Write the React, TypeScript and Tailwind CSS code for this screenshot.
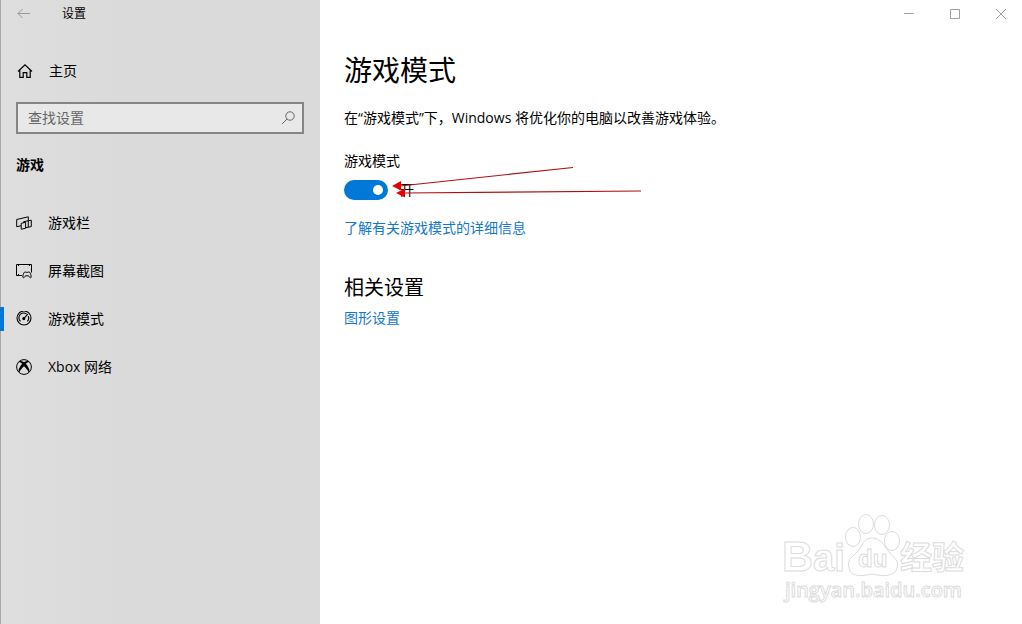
import { useState } from "react";
import clsx from "clsx";

type IconProps = { className?: string };

type NavItem = {
  id: string;
  label: string;
  icon: React.ComponentType<IconProps>;
};

const BackIcon = ({ className }: IconProps) => (
  <svg viewBox="0 0 16 16" fill="none" stroke="currentColor" className={className}>
    <path d="M14 7.5H2M6.500 3L2 7.500l4.500 4.500" />
  </svg>
);

const HomeIcon = ({ className }: IconProps) => (
  <svg viewBox="0 0 16 16" fill="none" stroke="currentColor" strokeWidth="1.2" className={className}>
    <path d="M1 8.5L8 1.8l7 6.7M2.8 7v7.400h3.400V9.600h3.600v4.800h3.400V7" />
  </svg>
);

const SearchIcon = ({ className }: IconProps) => (
  <svg viewBox="0 0 16 16" fill="none" stroke="currentColor" className={className}>
    <circle cx="10" cy="6" r="4.2" />
    <path d="M7 9l-5 5" />
  </svg>
);

const GameBarIcon = ({ className }: IconProps) => (
  <svg viewBox="0 0 16 16" fill="none" stroke="currentColor" className={className}>
    <path d="M5 10.800L.7 11.700V4.500l11.600-2.700v3.700" />
    <path d="M5.200 8.300l4.400-1v6l-4.400.9z" />
    <path d="M7.600 7.600V6.700l7.700-1.500v6.400l-5.500 1.100" />
    <path d="M12.300 5.800v6.300" />
  </svg>
);

const CapturesIcon = ({ className }: IconProps) => (
  <svg viewBox="0 0 16 16" fill="none" stroke="currentColor" className={className}>
    <path d="M6 12.500H.500V1.500h15v8M2.500 1.500v1.500M13.500 1.500v1.500M2.500 12.500V11" />
    <path d="M8.400 9.200c1-.5 1.400.2 2.600.2s1.600-.7 2.600-.2c.9.800 1.700 3.600 1.500 5.100-.4 1-1.400.5-2.600-1.500h-3c-1.200 2-2.200 2.500-2.600 1.500-.2-1.500.6-4.300 1.500-5.100z" />
  </svg>
);

const GaugeIcon = ({ className }: IconProps) => (
  <svg viewBox="0 0 16 16" fill="none" stroke="currentColor" strokeWidth="1.1" className={className}>
    <circle cx="8" cy="7" r="7" />
    <path d="M4.600 10.400A4.700 4.700 0 0 1 10.600 3.100M12.300 5.300a4.700 4.700 0 0 1-.9 5.100" />
    <path d="M8 7.400l3.800-4.200" />
    <circle cx="7.800" cy="7.600" r="1" fill="currentColor" />
  </svg>
);

const XboxIcon = ({ className }: IconProps) => (
  <svg viewBox="0 0 16 16" fill="none" className={className}>
    <circle cx="8" cy="8" r="7.400" stroke="currentColor" />
    <path
      d="M3.400 2.200C5 1.600 7 2.600 8 3.300 9 2.600 11 1.600 12.600 2.200L13.300 3C12.400 2.800 11 3.700 9.900 4.800 12 7.200 13.800 10.500 13.500 12.700L12.600 13.600C12.300 11.700 10 9 8 7.200 6 9 3.700 11.700 3.400 13.600L2.500 12.700C2.200 10.500 4 7.200 6.100 4.800 5 3.700 3.600 2.800 2.700 3z"
      fill="currentColor"
    />
  </svg>
);

const navItems: NavItem[] = [
  { id: "bar", label: "游戏栏", icon: GameBarIcon },
  { id: "captures", label: "屏幕截图", icon: CapturesIcon },
  { id: "mode", label: "游戏模式", icon: GaugeIcon },
  { id: "xbox", label: "Xbox 网络", icon: XboxIcon },
];

const Sidebar = () => {
  const [active, setActive] = useState("mode");

  return (
    <aside className="flex w-80 shrink-0 flex-col border-l border-[#a8a8a8] bg-linear-to-r from-[#dedede] to-[#dadada] to-40%">
      <header className="flex h-7 items-center pl-[15px]">
        <button type="button" aria-label="返回" className="text-[#999999]">
          <BackIcon className="size-4" />
        </button>
        <span className="pl-[30px] text-xs">设置</span>
      </header>
      <a href="#home" className="mt-5 flex h-[46px] items-center gap-4 pl-4">
        <HomeIcon className="size-4" />
        <span>主页</span>
      </a>
      <div className="mt-2 mr-4 ml-[15px] flex h-8 items-center border-2 border-[#858585] bg-[#e8e8e8] pr-1.5 pl-2.5">
        <input
          type="text"
          aria-label="查找设置"
          placeholder="查找设置"
          className="min-w-0 flex-1 bg-transparent outline-none placeholder:text-[#666666]"
        />
        <button type="button" aria-label="搜索" className="text-[#666666]">
          <SearchIcon className="size-4" />
        </button>
      </div>
      <h2 className="mt-[15px] flex h-8 items-center pl-[15px] font-bold">游戏</h2>
      <nav className="mt-[18px] flex flex-col">
        {navItems.map((item) => {
          const Icon = item.icon;
          return (
            <a
              key={item.id}
              href={`#${item.id}`}
              onClick={() => setActive(item.id)}
              className="-ml-px flex h-12 items-center"
            >
              <span
                className={clsx("h-6 w-1", active === item.id && "bg-[#0078d7]")}
              />
              <Icon className="ml-3 size-4" />
              <span className="ml-4">{item.label}</span>
            </a>
          );
        })}
      </nav>
    </aside>
  );
};

const WindowControls = () => (
  <div className="-mr-0.5 flex h-7 justify-end text-[#a0a0a0]">
    <button type="button" aria-label="最小化" className="flex w-[46px] items-center justify-center">
      <svg viewBox="0 0 10 10" stroke="currentColor" className="size-2.5">
        <path d="M0 4.500h10" />
      </svg>
    </button>
    <button type="button" aria-label="最大化" className="flex w-[46px] items-center justify-center">
      <svg viewBox="0 0 10 10" fill="none" stroke="currentColor" className="size-2.5">
        <path d="M.5.500h9v9h-9z" />
      </svg>
    </button>
    <button type="button" aria-label="关闭" className="flex w-[46px] items-center justify-center">
      <svg viewBox="0 0 10 10" stroke="currentColor" className="size-2.5">
        <path d="M0 0l10 10M10 0L0 10" />
      </svg>
    </button>
  </div>
);

// red arrows pointing at the switch
const Arrows = () => (
  <svg
    viewBox="0 0 250 34"
    className="pointer-events-none absolute -top-4 left-12 h-[34px] w-[250px]"
  >
    <g stroke="#b01010" fill="none" strokeWidth="1.200">
      <path d="M181 3.500L8 22" />
      <path d="M249 27L12 29" />
    </g>
    <path d="M0 22L9 17V26.500z" fill="#e80000" />
    <path d="M4 29L13 24.500V33.500z" fill="#e80000" />
  </svg>
);

const Watermark = () => (
  <svg
    viewBox="0 0 190 96"
    fill="#ffffff"
    stroke="#dcdcdc"
    className="pointer-events-none absolute right-[52px] bottom-[18px] w-[190px]"
    aria-hidden="true"
  >
    <ellipse cx="73" cy="27" rx="7.500" ry="9.500" />
    <ellipse cx="86" cy="14" rx="7.500" ry="9.500" />
    <ellipse cx="102" cy="15" rx="7.500" ry="9.500" />
    <ellipse cx="112" cy="31" rx="7.500" ry="9.500" />
    <path d="M92 28c9 0 11 7 17 14s10 8 8 16-12 9-25 6c-13 3-21 2-23-6s2-10 8-16 6-14 15-14z" />
    <text x="2" y="61" fontSize="43" className="font-['Liberation_Sans'] font-bold">
      B
    </text>
    <text x="33" y="61" fontSize="38" className="font-['Liberation_Sans'] font-bold">
      ai
    </text>
    <text x="78" y="57" fontSize="24" className="font-['Liberation_Sans'] font-bold">
      du
    </text>
    <text x="120" y="59" fontSize="32" className="font-['Noto_Sans_CJK_SC'] font-bold">
      经验
    </text>
    <text x="5" y="87" fontSize="20" className="font-['Open_Sans'] font-semibold">
      jingyan.baidu.com
    </text>
  </svg>
);

export default function App() {
  const [enabled, setEnabled] = useState(true);

  return (
    <div className="relative flex min-h-screen overflow-x-hidden bg-white font-['Open_Sans','Noto_Sans_CJK_SC',sans-serif] text-sm leading-5 text-black">
      <Sidebar />
      <main className="min-w-0 flex-1">
        <WindowControls />
        <div className="flex flex-col items-start pt-5 pr-6 pl-6">
          <h1 className="text-[28px] leading-11">游戏模式</h1>
          <p className="mt-4">
            在“游戏模式”下，Windows 将优化你的电脑以改善游戏体验。
          </p>
          <label htmlFor="game-mode" className="mt-[23px]">
            游戏模式
          </label>
          <div className="relative mt-[9px] flex h-5 items-center gap-3">
            <span className="relative flex">
              <input
                id="game-mode"
                type="checkbox"
                role="switch"
                checked={enabled}
                onChange={(e) => setEnabled(e.target.checked)}
                className="peer h-5 w-11 appearance-none rounded-full bg-[#888888] checked:bg-[#0078d7]"
              />
              <span className="pointer-events-none absolute top-[5px] left-[5px] size-2.5 rounded-full bg-white peer-checked:left-[29px]" />
            </span>
            <span>{enabled ? "开" : "关"}</span>
            <Arrows />
          </div>
          <a href="#learn" className="mt-[18px] text-[#1478c8]">
            了解有关游戏模式的详细信息
          </a>
          <h2 className="mt-8 text-xl leading-9">相关设置</h2>
          <a href="#graphics" className="mt-0.5 text-[#1478c8]">
            图形设置
          </a>
        </div>
      </main>
      <Watermark />
    </div>
  );
}
